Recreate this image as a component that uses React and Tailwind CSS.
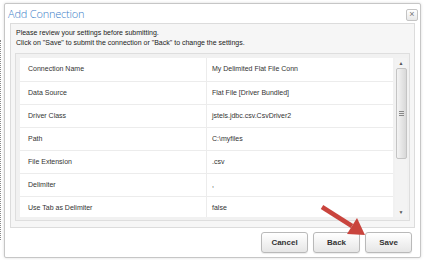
const rows = [
  ["Connection Name", "My Delimited Flat File Conn"],
  ["Data Source", "Flat File [Driver Bundled]"],
  ["Driver Class", "jstels.jdbc.csv.CsvDriver2"],
  ["Path", "C:\\myfiles"],
  ["File Extension", ".csv"],
  ["Delimiter", ","],
  ["Use Tab as Delimiter", "false"],
];

function Btn({ children }) {
  return (
    <button className="h-[21px] w-[47px] rounded-[3px] border border-[#b9b9b9] bg-gradient-to-b from-white to-[#e6e6e6] text-[8px] font-semibold text-[#333] shadow-[0_1px_1px_rgba(0,0,0,0.08)]">
      {children}
    </button>
  );
}

export default function App() {
  return (
    <div
      className="relative h-[260px] w-[425px] overflow-hidden bg-white"
      style={{ fontFamily: '"Liberation Sans", Arial, sans-serif' }}
    >
      <div className="absolute left-0 top-[40px] h-[200px] border-l border-dotted border-[#888]" />
      <div className="ml-[4px] mt-[3px] flex h-[255px] w-[417px] flex-col rounded-[2px] border border-[#c6c6c6] bg-white shadow-[0_0_3px_rgba(0,0,0,0.15)]">
        {/* title */}
        <div className="flex h-[19px] items-center justify-between pl-[3px] pr-[2px]">
          <span
            className="text-[11px] leading-none tracking-[-0.2px] text-[#3a7cc8]"
            style={{ fontFamily: '"Open Sans", "Liberation Sans", sans-serif', fontWeight: 300 }}
          >
            Add Connection
          </span>
          <span className="mt-[2px] flex h-[12px] w-[12px] items-center justify-center rounded-[2px] border border-[#c4c4c4] bg-gradient-to-b from-white to-[#e8e8e8] text-[9px] leading-none text-[#777]">
            ×
          </span>
        </div>

        {/* body */}
        <div className="mx-[5px] flex h-[205px] flex-col border border-[#dcdcdc] bg-[#f6f6f6]">
          <div className="px-[5px] pt-[4px] text-[7px] leading-[10px] text-[#222]">
            <p>Please review your settings before submitting.</p>
            <p>Click on "Save" to submit the connection or "Back" to change the settings.</p>
          </div>
          <div className="mx-[4px] mt-[5px] flex h-[168px] gap-[2px] border border-[#dedede] bg-[#f1f1f1] p-[4px] pr-[2px]">
            <div className="h-[159px] flex-1 overflow-hidden bg-white">
              {rows.map(([k, v], i) => (
                <div
                  key={k}
                  className={`flex border-b border-[#ececec] text-[7px] text-[#333] ${i === 0 ? "h-[24px]" : "h-[23px]"}`}
                >
                  <div className="flex w-[187px] items-center border-r border-[#ececec] pl-[8px]">{k}</div>
                  <div className="flex flex-1 items-center pl-[5px]">{v}</div>
                </div>
              ))}
            </div>
            {/* scrollbar */}
            <div className="flex h-[159px] w-[12px] flex-col items-center bg-[#f3f3f3]">
              <div className="flex h-[10px] items-center text-[5px] leading-none text-[#555]">▲</div>
              <div className="flex h-[91px] w-[11px] items-center justify-center rounded-[2px] border border-[#c4c4c4] bg-gradient-to-r from-[#f4f4f4] to-[#d8d8d8]">
                <div className="flex flex-col gap-[1px]">
                  <div className="h-px w-[5px] bg-[#888]" />
                  <div className="h-px w-[5px] bg-[#888]" />
                  <div className="h-px w-[5px] bg-[#888]" />
                </div>
              </div>
              <div className="flex-1" />
              <div className="flex h-[10px] items-center text-[5px] leading-none text-[#555]">▼</div>
            </div>
          </div>
        </div>

        {/* footer */}
        <div className="flex flex-1 items-start justify-end gap-[5px] pr-[8px] pt-[4px]">
          <Btn>Cancel</Btn>
          <Btn>Back</Btn>
          <Btn>Save</Btn>
        </div>
      </div>

      {/* red pointer arrow */}
      <svg className="pointer-events-none absolute left-0 top-0" width="425" height="260">
        <line x1="322" y1="207" x2="352" y2="226" stroke="#c9443d" strokeWidth="4.5" />
        <polygon points="365,235 347,234 357,218" fill="#c9443d" />
      </svg>
    </div>
  );
}
